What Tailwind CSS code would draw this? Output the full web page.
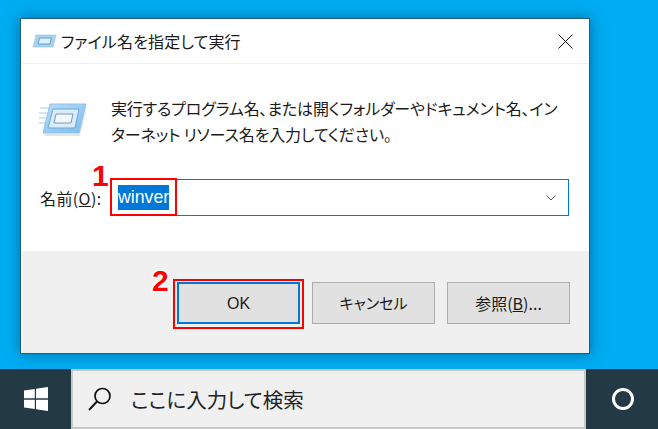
<!DOCTYPE html>
<html lang="ja">
<head>
    <meta charset="UTF-8">
    <title>ファイル名を指定して実行</title>
    <script src="https://cdn.jsdelivr.net/npm/@tailwindcss/browser@4"></script>
</head>
<body class="w-[658px] h-[429px] overflow-hidden bg-[#00adf2] text-[#1a1a1a] font-['Noto_Sans_CJK_JP','Liberation_Sans',sans-serif] [font-feature-settings:'palt']">
    <!-- Desktop area -->
    <div class="h-[369px] pt-[18px] pl-[20px]">
        <div class="relative w-[570px] h-[336px] flex flex-col bg-white border border-[#1b5f80] shadow-[0_0_14px_rgba(0,60,100,0.55)]">
            <!-- Title bar -->
            <div class="h-[45px] shrink-0 flex items-center pl-[11px] pr-[16px] border-b border-[#f0f0f0]">
                <svg class="w-[25px] h-[16px] mr-[4px]" viewBox="0 0 25 16">
                    <path d="M4 2h20l-3 12H1z" fill="#a9d2f0" stroke="#8fc0e6" stroke-width="0.6"/>
                    <path d="M7.500 5h12l-1.500 6H6z" fill="#dff0fb" stroke="#5f9fd0" stroke-width="1"/>
                </svg>
                <span class="text-[16px] leading-none tracking-[0.15px]">ファイル名を指定して実行</span>
                <svg class="ml-auto w-[15px] h-[15px]" viewBox="0 0 15 15"><path d="M.5.500l14 14M14.500.500l-14 14" stroke="#111" stroke-width="1" fill="none"/></svg>
            </div>
            <!-- Body -->
            <div class="flex-1 flex flex-col bg-white">
                <div class="flex pt-[35px] pl-[18px] h-[115px]">
                    <svg class="w-[48px] h-[34px] mr-[24px] mt-[3px]" viewBox="0 0 48 34">
                        <defs><linearGradient id="runicon" x1="0" y1="0" x2="1" y2="1"><stop offset="0" stop-color="#b9dcf6"/><stop offset="1" stop-color="#7fbdec"/></linearGradient></defs>
                        <path d="M1 6h9M0 11h8M0 16h7M0 21h6" stroke="#cfe6f8" stroke-width="2"/>
                        <path d="M11 2h36l-7 29H4z" fill="url(#runicon)" stroke="#8fc2ea"/>
                        <path d="M14 7h26l-4 19H9z" fill="#d8ecfb" stroke="#6aa9da"/>
                        <path d="M17 12h17l-2 9H15z" fill="#f3f8fc" stroke="#7a98b0"/>
                        <path d="M5 32h35l7-26v3l-6 25H6z" fill="#000" opacity=".1"/>
                    </svg>
                    <p class="text-[16px] leading-[26px] -mt-[4px] w-[455px] tracking-[-0.15px]">実行するプログラム名、または開くフォルダーやドキュメント名、インターネット リソース名を入力してください。</p>
                </div>
                <div class="flex items-center pl-[19px] h-[37px]">
                    <label class="text-[16px] leading-none w-[70px] tracking-[0.4px]">名前(<span class="underline">O</span>):</label>
                    <div class="w-[459px] h-[37px] flex items-center border border-[#0078d7] pl-[7px] pr-[12px] bg-white">
                        <span class="bg-[#0078d7] text-white h-[25px] text-[17.7px] leading-[24px] font-['Liberation_Sans',sans-serif]">winver</span>
                        <svg class="ml-auto w-[10px] h-[6px]" viewBox="0 0 10 6"><path d="M.500.500L5 5 9.500.500" stroke="#555" fill="none"/></svg>
                    </div>
                </div>
            </div>
            <!-- Button row -->
            <div class="h-[102px] shrink-0 bg-[#f0f0f0] flex justify-end items-start gap-[12px] pt-[31px] pr-[19px]">
                <button class="w-[123px] h-[42px] pt-[2px] bg-[#e1e1e1] border-2 border-[#0078d7] text-[16px] font-['Liberation_Sans','Noto_Sans_CJK_JP',sans-serif]">OK</button>
                <button class="w-[123px] h-[42px] bg-[#e1e1e1] border border-[#adadad] text-[15px]">キャンセル</button>
                <button class="w-[123px] h-[42px] bg-[#e1e1e1] border border-[#adadad] text-[16px]">参照(<span class="underline">B</span>)...</button>
            </div>
            <!-- Red annotations -->
            <div class="absolute left-[89px] top-[159px] w-[67px] h-[38px] border-[2px] border-[#ff0000]"></div>
            <div class="absolute left-[152px] top-[260px] w-[131px] h-[50px] border-[2px] border-[#ff0000]"></div>
            <span class="absolute left-[71px] top-[145px] text-[#ff0000] text-[30px] leading-[24px] font-bold font-['Liberation_Sans',sans-serif] [-webkit-text-stroke:3px_white] [paint-order:stroke_fill]">1</span>
            <span class="absolute left-[131px] top-[250px] text-[#ff0000] text-[30px] leading-[24px] font-bold font-['Liberation_Sans',sans-serif] [-webkit-text-stroke:3px_white] [paint-order:stroke_fill]">2</span>
        </div>
    </div>
    <!-- Taskbar -->
    <div class="h-[60px] flex bg-[#233a45]">
        <div class="w-[71px] flex items-center justify-center">
            <svg class="w-[24px] h-[24px]" viewBox="0 0 24 24"><path d="M0 3.400l10.800-1.500v9.400H0zM12 1.700L24 0v11.300H12zM0 12.700h10.800v9.400L0 20.600zM12 12.700h12V24l-12-1.700z" fill="#fff"/></svg>
        </div>
        <div class="w-[515px] flex items-center bg-[#f0f0f0] border-[2px] border-[#c8c8c8] pl-[15px]">
            <svg class="w-[24px] h-[24px] mr-[19px]" viewBox="0 0 24 24"><circle cx="14.500" cy="9" r="7.500" stroke="#111" stroke-width="1.700" fill="none"/><path d="M9 14.500L1 23" stroke="#111" stroke-width="1.900" fill="none"/></svg>
            <span class="text-[20.500px] leading-none text-[#222]">ここに入力して検索</span>
        </div>
        <div class="flex-1 flex items-center justify-center pl-[2px]">
            <div class="w-[22px] h-[22px] rounded-full border-[3px] border-white"></div>
        </div>
    </div>
</body>
</html>
